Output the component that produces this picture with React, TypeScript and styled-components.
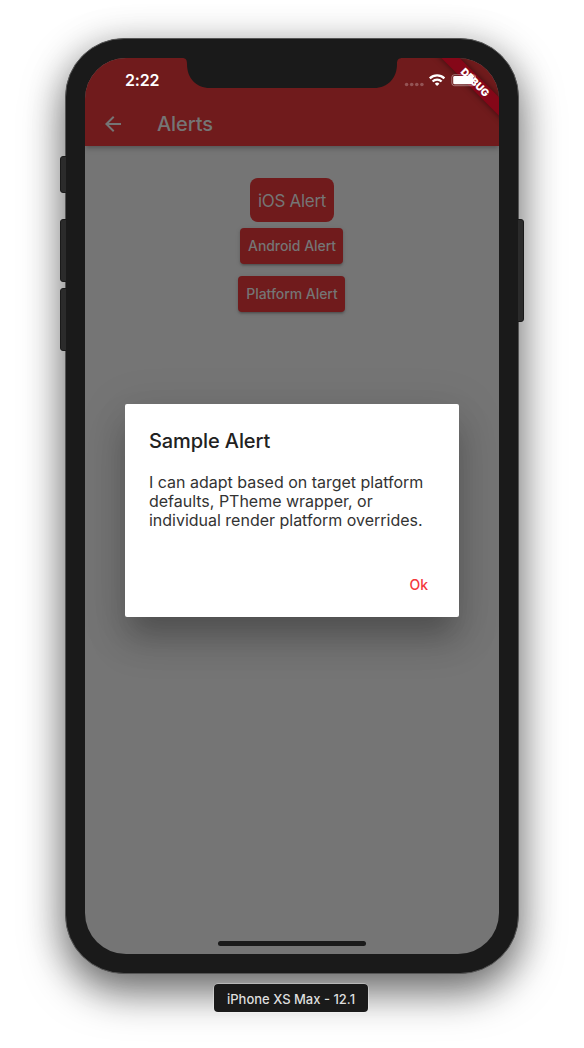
import React from 'react';
import styled, { createGlobalStyle } from 'styled-components';

const GlobalStyle = createGlobalStyle`
  * { box-sizing: border-box; }
  body {
    margin: 0;
    background: #fff;
    font-family: Inter, 'Liberation Sans', sans-serif;
  }
`;

const Stage = styled.main`
  width: 584px;
  height: 1048px;
  padding-top: 38px;
  overflow: hidden;
  display: flex;
  flex-direction: column;
  align-items: center;
  gap: 10px;
`;

const Phone = styled.div`
  position: relative;
  width: 454px;
  height: 936px;
  padding: 19px;
  border: 1px solid #555;
  border-radius: 59px;
  background: #1a1a1a;
  box-shadow: 0 18px 42px rgba(0, 0, 0, 0.54), 0 4px 40px rgba(0, 0, 0, 0.16);
`;

const SideKey = styled.span<{ $side: 'left' | 'right'; $top: number; $height: number }>`
  position: absolute;
  ${(p) => p.$side}: -6px;
  top: ${(p) => p.$top}px;
  width: 7px;
  height: ${(p) => p.$height}px;
  border: 1px solid #1a1a1a;
  border-radius: ${(p) => (p.$side === 'left' ? '3px 1px 1px 3px' : '1px 3px 3px 1px')};
  background: #2b2b2b;
`;

const Screen = styled.div`
  position: relative;
  width: 414px;
  height: 896px;
  border-radius: 41px;
  overflow: hidden;
  background: #757575;
  display: flex;
  flex-direction: column;
`;

const AppBar = styled.header`
  height: 88px;
  flex: none;
  background: #701b1c;
  box-shadow: 0 2px 4px -1px rgba(0, 0, 0, 0.22), 0 4px 5px rgba(0, 0, 0, 0.1);
`;

const StatusBar = styled.div`
  height: 44px;
  padding: 0 23px 0 40px;
  display: flex;
  align-items: center;
  justify-content: space-between;
`;

const Clock = styled.span`
  position: relative;
  z-index: 2;
  color: #fff;
  font-size: 16px;
  line-height: 20px;
  font-weight: 600;
  letter-spacing: -0.2px;
`;

const StatusIcons = styled.svg`
  position: relative;
  z-index: 2;
  width: 72px;
  height: 16px;
`;

const Notch = styled.svg`
  position: absolute;
  top: 0;
  left: 97px;
  width: 221px;
  height: 30px;
`;

const Ribbon = styled.div`
  position: absolute;
  z-index: 1;
  top: 18px;
  right: -36px;
  width: 120px;
  height: 13px;
  transform: rotate(45deg);
  background: #850718;
  box-shadow: 0 0 6px rgba(0, 0, 0, 0.5);
`;

const RibbonText = styled.div`
  position: absolute;
  z-index: 3;
  top: 18px;
  right: -36px;
  width: 120px;
  height: 13px;
  transform: rotate(45deg);
  color: #fff;
  font-size: 10.2px;
  line-height: 13px;
  font-weight: 900;
  text-align: center;
`;

const Toolbar = styled.div`
  height: 44px;
  padding-left: 16px;
  display: flex;
  align-items: center;
  gap: 32px;
`;

const BackIcon = styled.svg`
  width: 24px;
  height: 24px;
  fill: #757575;
`;

const Title = styled.h1`
  margin: 0;
  color: #757575;
  font-size: 20px;
  line-height: 24px;
  font-weight: 500;
  letter-spacing: -0.1px;
`;

const Actions = styled.section`
  padding-top: 32px;
  display: flex;
  flex-direction: column;
  align-items: center;
`;

const CupertinoButton = styled.button`
  width: 84px;
  height: 44px;
  margin-bottom: 6px;
  padding: 1px 0 0;
  border: 0;
  border-radius: 8px;
  background: #701b1c;
  color: #757575;
  font: 400 17px Inter, sans-serif;
  letter-spacing: -0.3px;
  white-space: nowrap;
`;

const MaterialButton = styled.button<{ $width: number }>`
  width: ${(p) => p.$width}px;
  height: 36px;
  margin: 0 1px 12px 0;
  padding: 0 0 2px 1px;
  border: 0;
  border-radius: 4px;
  background: #701b1c;
  color: #757575;
  font: 500 14px Inter, sans-serif;
  letter-spacing: -0.05px;
  white-space: nowrap;
  box-shadow: 0 3px 1px -2px rgba(0, 0, 0, 0.1), 0 2px 2px rgba(0, 0, 0, 0.14), 0 1px 5px rgba(0, 0, 0, 0.12);
`;

const DialogLayer = styled.div`
  position: absolute;
  inset: 9px 0 0;
  display: flex;
  align-items: center;
  justify-content: center;
`;

const Dialog = styled.section`
  width: 334px;
  height: 213px;
  padding: 24.5px 24px 8px;
  border-radius: 2px;
  background: #fff;
  box-shadow: 0 22px 24px -10px rgba(0, 0, 0, 0.16), 0 24px 38px 3px rgba(0, 0, 0, 0.14),
    0 9px 46px 8px rgba(0, 0, 0, 0.08);
  display: flex;
  flex-direction: column;
`;

const DialogTitle = styled.h2`
  margin: 0 0 20px;
  color: #212121;
  font-size: 20px;
  line-height: 24px;
  font-weight: 500;
  letter-spacing: -0.1px;
`;

const DialogText = styled.p`
  margin: 0;
  color: #333;
  font-size: 16px;
  line-height: 19px;
  letter-spacing: -0.01px;
  white-space: nowrap;
`;

const DialogAction = styled.button`
  align-self: flex-end;
  margin: auto 7px 14.5px 0;
  padding: 0;
  border: 0;
  background: none;
  color: #f4383c;
  font: 500 14px/20px Inter, sans-serif;
`;

const HomeIndicator = styled.div`
  position: absolute;
  bottom: 8px;
  left: 133px;
  width: 148px;
  height: 5px;
  border-radius: 3px;
  background: #1a1a1a;
`;

const DeviceLabel = styled.div`
  position: relative;
  flex: none;
  width: 154px;
  height: 28px;
  margin-right: 2px;
  border-radius: 4px;
  background: #1a1a1a;
  box-shadow: 0 0 0 0.5px rgba(255, 255, 255, 0.6);
  color: #dedede;
  font-size: 13px;
  line-height: 31px;
  font-weight: 500;
  text-align: center;
  white-space: nowrap;
`;

export default function App() {
  return (
    <>
      <GlobalStyle />
      <Stage>
        <Phone>
          <SideKey $side="left" $top={117} $height={37} />
          <SideKey $side="left" $top={180} $height={63} />
          <SideKey $side="left" $top={249} $height={63} />
          <SideKey $side="right" $top={180} $height={103} />
          <Screen>
            <AppBar>
              <StatusBar>
                <Clock>2:22</Clock>
                <StatusIcons viewBox="0 0 72 16">
                  <g fill="#fff" fillOpacity="0.25">
                    <circle cx="2.6" cy="12.5" r="1.8" />
                    <circle cx="7.7" cy="12.5" r="1.8" />
                    <circle cx="12.8" cy="12.5" r="1.8" />
                    <circle cx="17.9" cy="12.5" r="1.8" />
                  </g>
                  <g transform="translate(.6 .6)">
                    <g fill="none" stroke="#fff" strokeWidth="2.3">
                      <path d="M25.2 5.8a10.4 10.4 0 0 1 14.6 0" />
                      <path d="M28 8.9a6.3 6.3 0 0 1 9 0" />
                    </g>
                    <path d="M32.5 13.5l-2.3-2.4a3.3 3.3 0 0 1 4.6 0z" fill="#fff" />
                  </g>
                  <rect x="47.8" y="2.7" width="24" height="11" rx="2.7" fill="none" stroke="#fff" strokeOpacity="0.4" />
                  <rect x="49.2" y="4.1" width="20" height="8.2" rx="1.4" fill="#fff" />
                </StatusIcons>
              </StatusBar>
              <Toolbar>
                <BackIcon viewBox="0 0 24 24">
                  <path d="M20 11H7.83l5.59-5.59L12 4l-8 8 8 8 1.41-1.41L7.83 13H20v-2z" />
                </BackIcon>
                <Title>Alerts</Title>
              </Toolbar>
            </AppBar>
            <Actions>
              <CupertinoButton>iOS Alert</CupertinoButton>
              <MaterialButton $width={103}>Android Alert</MaterialButton>
              <MaterialButton $width={107}>Platform Alert</MaterialButton>
            </Actions>
            <Notch viewBox="0 0 221 30">
              <path d="M0 0c4 0 5 2 5 6c0 14 9 24 23 24h164c14 0 23-10 23-24c0-4 1-6 6-6z" fill="#1a1a1a" />
            </Notch>
            <Ribbon />
            <RibbonText>DEBUG</RibbonText>
            <DialogLayer>
              <Dialog>
                <DialogTitle>Sample Alert</DialogTitle>
                <DialogText>
                  I can adapt based on target platform
                  <br />
                  defaults, PTheme wrapper, or
                  <br />
                  individual render platform overrides.
                </DialogText>
                <DialogAction>Ok</DialogAction>
              </Dialog>
            </DialogLayer>
            <HomeIndicator />
          </Screen>
        </Phone>
        <DeviceLabel>iPhone XS Max - 12.1</DeviceLabel>
      </Stage>
    </>
  );
}
